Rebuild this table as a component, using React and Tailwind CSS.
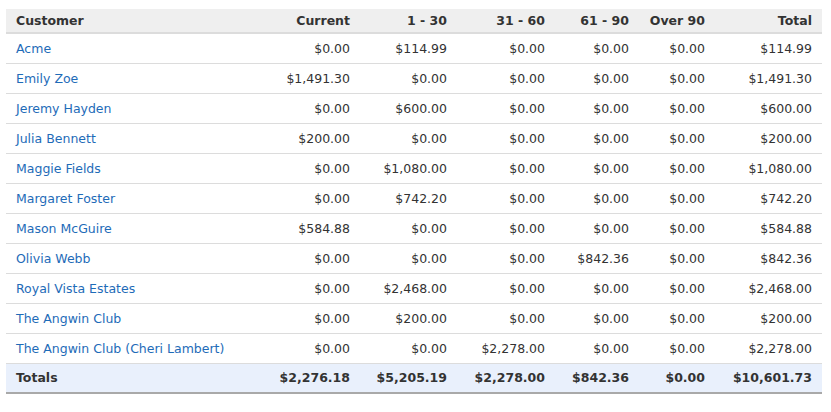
import React from 'react';

const rows = [
  ['Acme', '$0.00', '$114.99', '$0.00', '$0.00', '$0.00', '$114.99'],
  ['Emily Zoe', '$1,491.30', '$0.00', '$0.00', '$0.00', '$0.00', '$1,491.30'],
  ['Jeremy Hayden', '$0.00', '$600.00', '$0.00', '$0.00', '$0.00', '$600.00'],
  ['Julia Bennett', '$200.00', '$0.00', '$0.00', '$0.00', '$0.00', '$200.00'],
  ['Maggie Fields', '$0.00', '$1,080.00', '$0.00', '$0.00', '$0.00', '$1,080.00'],
  ['Margaret Foster', '$0.00', '$742.20', '$0.00', '$0.00', '$0.00', '$742.20'],
  ['Mason McGuire', '$584.88', '$0.00', '$0.00', '$0.00', '$0.00', '$584.88'],
  ['Olivia Webb', '$0.00', '$0.00', '$0.00', '$842.36', '$0.00', '$842.36'],
  ['Royal Vista Estates', '$0.00', '$2,468.00', '$0.00', '$0.00', '$0.00', '$2,468.00'],
  ['The Angwin Club', '$0.00', '$200.00', '$0.00', '$0.00', '$0.00', '$200.00'],
  ['The Angwin Club (Cheri Lambert)', '$0.00', '$0.00', '$2,278.00', '$0.00', '$0.00', '$2,278.00']
];

const totals = ['$2,276.18', '$5,205.19', '$2,278.00', '$842.36', '$0.00', '$10,601.73'];
const headers = ['Current', '1 - 30', '31 - 60', '61 - 90', 'Over 90', 'Total'];
const widths = ['w-[100px]', 'w-[97px]', 'w-[98px]', 'w-[84px]', 'w-[76px]', 'w-[107px]'];

export default function App() {
  return (
    <div className="bg-white w-[831px] h-[412px] pt-[9px] pl-[6px] font-['DejaVu_Sans',sans-serif] text-[12.5px] text-[#333]">
      <table className="table-fixed border-collapse w-[816px]">
        <colgroup>
          <col className="w-[254px]" />
          {widths.map((w, i) => (
            <col key={i} className={w} />
          ))}
        </colgroup>
        <thead>
          <tr className="bg-[#efefef] border-b-2 border-[#dcdcdc] h-[24px]">
            <th className="text-left font-bold px-[10px] pt-[2px]">Customer</th>
            {headers.map((h) => (
              <th key={h} className="text-right font-bold px-[10px] pt-[2px]">{h}</th>
            ))}
          </tr>
        </thead>
        <tbody>
          {rows.map((r) => (
            <tr key={r[0]} className="border-b border-[#dcdcdc] h-[30px]">
              <td className="px-[10px] pt-[3px] text-[#1e6bb8]">{r[0]}</td>
              {r.slice(1).map((v, i) => (
                <td key={i} className="px-[10px] pt-[3px] text-right">{v}</td>
              ))}
            </tr>
          ))}
          <tr className="bg-[#e9f0fc] border-b-2 border-[#a9a9a9] h-[30px] font-bold">
            <td className="px-[10px] pt-[1px]">Totals</td>
            {totals.map((v, i) => (
              <td key={i} className="px-[10px] pt-[1px] text-right">{v}</td>
            ))}
          </tr>
        </tbody>
      </table>
    </div>
  );
}
